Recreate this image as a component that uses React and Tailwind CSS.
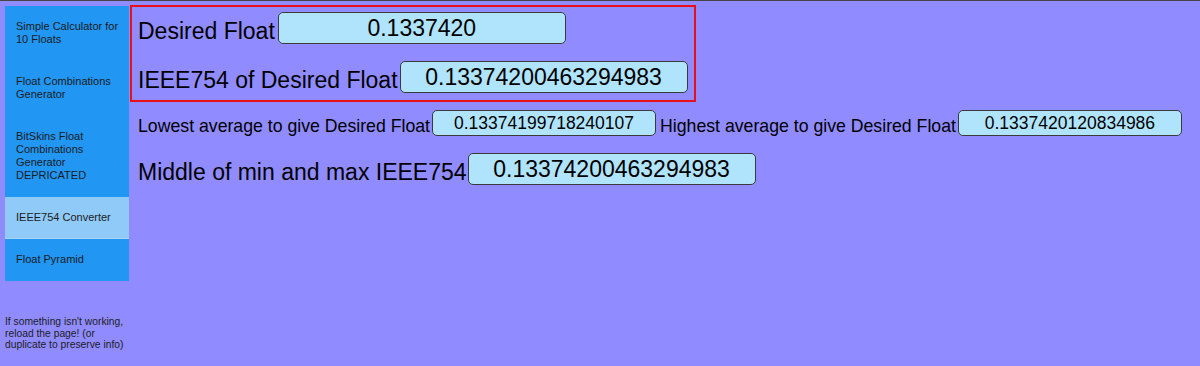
import { useState } from 'react';

const navItems = [
  { label: 'Simple Calculator for 10 Floats' },
  { label: 'Float Combinations Generator' },
  { label: 'BitSkins Float Combinations Generator DEPRICATED' },
  { label: 'IEEE754 Converter', active: true },
  { label: 'Float Pyramid' },
];

function BigInput({ value, className = '' }) {
  return (
    <input
      readOnly
      value={value}
      className={"h-[32px] w-[288px] shrink-0 rounded-[5px] border border-[#3a3a3a] bg-[#b0e4fc] p-0 text-center text-[23px] text-black outline-none " + className}
    />
  );
}

function SmallInput({ value, className = '' }) {
  return (
    <input
      readOnly
      value={value}
      className={"h-[26px] w-[224px] shrink-0 rounded-[5px] border border-[#3a3a3a] bg-[#b0e4fc] p-0 text-center text-[17.5px] text-black outline-none " + className}
    />
  );
}

export default function App() {
  const [desired] = useState('0.1337420');

  return (
    <div className="min-h-[366px] bg-[#908cff] font-['Liberation_Sans',Arial,sans-serif] text-black">
      <div className="h-px bg-[#454545]" />
      <div className="flex">
        {/* sidebar */}
        <div className="ml-[5px] mt-[5px] flex w-[124px] shrink-0 flex-col">
          <nav className="flex flex-col bg-[#2196f3]">
            {navItems.map(item => (
              <div
                key={item.label}
                className={"py-[14px] pl-[11px] pr-[3px] text-[11px] leading-[13px] text-[#1c1c1c] " + (item.active ? 'bg-[#90caf9] border-b border-[#a8d4f8]' : 'mb-px')}
              >
                {item.label}
              </div>
            ))}
          </nav>
          <p className="mt-[35px] w-[130px] text-[10.3px] leading-[11.6px] text-[#1c1c1c]">
            If something isn't working,<br />reload the page! (or<br />duplicate to preserve info)
          </p>
        </div>

        {/* main */}
        <div className="ml-px mt-[4px] flex flex-col">
          <div className="flex w-[566px] flex-col gap-[17px] border-2 border-[#e8101c] pb-[7px] pl-[6px] pt-[5px]">
            <div className="flex items-end">
              <span className="text-[23px] leading-[26px]">Desired Float</span>
              <BigInput value={desired} className="ml-[3px]" />
            </div>
            <div className="flex items-end">
              <span className="text-[23px] leading-[26px]">IEEE754 of Desired Float</span>
              <BigInput value="0.13374200463294983" className="ml-[2px]" />
            </div>
          </div>

          <div className="mt-[8px] flex items-end pl-[8px]">
            <span className="text-[17.7px] leading-[20px]">Lowest average to give Desired Float</span>
            <SmallInput value="0.13374199718240107" className="ml-[2px]" />
            <span className="ml-[4px] text-[17.7px] leading-[20px]">Highest average to give Desired Float</span>
            <SmallInput value="0.1337420120834986" className="ml-[2px]" />
          </div>

          <div className="mt-[17px] flex items-end pl-[8px]">
            <span className="text-[23px] leading-[26px]">Middle of min and max IEEE754</span>
            <BigInput value="0.13374200463294983" className="ml-[1px]" />
          </div>
        </div>
      </div>
    </div>
  );
}
